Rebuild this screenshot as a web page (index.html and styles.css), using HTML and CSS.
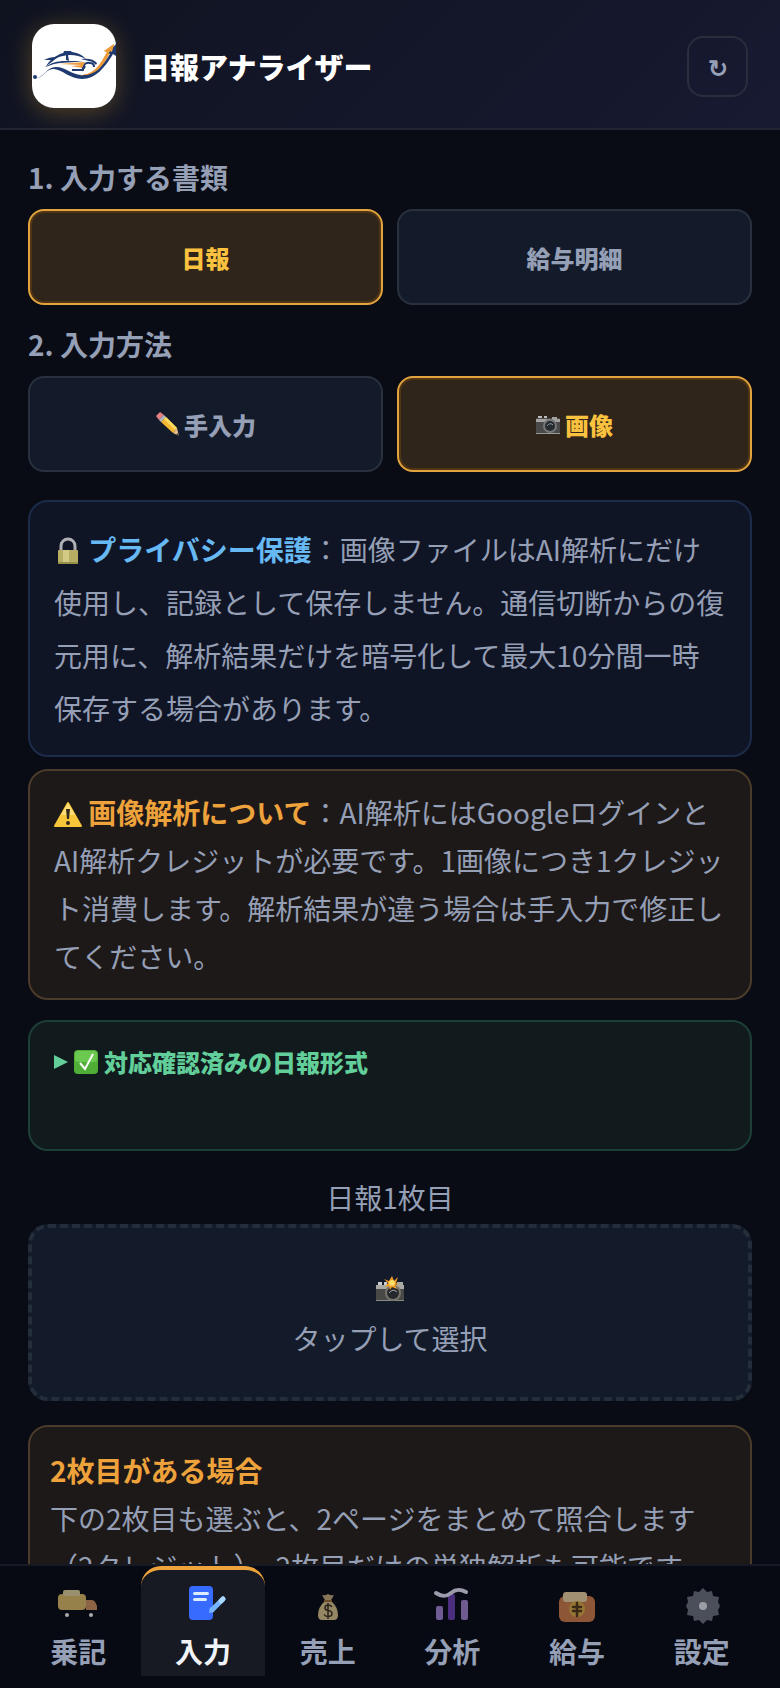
FILE: index.html
```html
<!DOCTYPE html>
<html lang="ja">
<head>
    <meta charset="UTF-8">
    <meta name="viewport" content="width=device-width, initial-scale=1.0">
    <title>日報アナライザー</title>
    <link rel="stylesheet" href="styles.css">
</head>
<body>
    <header class="header">
        <svg class="logo" viewBox="0 0 84 84" aria-hidden="true">
            <rect width="84" height="84" fill="#fff"/>
            <g fill="#1e3a70">
                <path d="M14 42c4-6 8-9 14-12 9-4 20-2 26 5-8-4-16-5-23-3-7 1-9 5-17 10z"/>
                <path d="M12 36c4-2 7-3 12-3l-4 3c-3 0-5 0-8 0zM13 43c6-4 12-6 20-6l18 0c-10 2-22 1-29 3-3 1-5 2-9 3z"/>
                <path d="M49 35c7-1 13 0 16 4l-1 2c-3-4-8-4-15-6z"/>
                <path d="M31 30l1-3h7l2 3z"/>
                <path d="M34 31h2l1 6-3-1z"/>
            </g>
            <path d="M51 47c-1-6 3-9 7-8 3 0 4 2 4 4M40 46l10 0c1 0 2-2 3-4" fill="none" stroke="#1e3a70" stroke-width="2"/>
            <path d="M27 40l26-2-3 6-11-2 11-1z" fill="#ee9c3b"/>
            <path d="M48 51c14 0 20-10 27-23l-3-1 10-7-1 10-3-1c-7 14-14 23-25 23-2 0-4 0-5-1z" fill="#ee9c3b"/>
            <path d="M4 54c8 0 10-11 20-11 10 0 15 8 27 8 13 0 19-8 27-21l-2-1 8-9v12l-3-2c-8 13-17 25-31 25-12 0-19-9-28-10-8-1-10 9-18 9z" fill="#1e3a70"/>
            <path d="M48 51c14 0 20-10 27-23l-3-1 10-7-2 8-2-1c-7 14-14 23-25 24-2 0-4 1-5 0z" fill="#ee9c3b"/>
            <circle cx="3" cy="53" r="2" fill="#1e3a70"/>
        </svg>
        <h1>日報アナライザー</h1>
        <button type="button" class="reload-button" aria-label="再読み込み">↻</button>
    </header>

    <main class="content">
        <h2>1. 入力する書類</h2>
        <div class="button-group">
            <button type="button" class="choice active">日報</button>
            <button type="button" class="choice">給与明細</button>
        </div>

        <h2>2. 入力方法</h2>
        <div class="button-group">
            <button type="button" class="choice">
                <svg class="emoji-small" viewBox="0 0 24 24" aria-hidden="true">
                    <path d="M1 4l4-4 4 3-5 5z" fill="#e4807f"/>
                    <path d="M4 8l5-5 2 2-5 5z" fill="#b4bac2"/>
                    <path d="M6 10l5-5 11 11-4 5z" fill="#f5b731"/>
                    <path d="M9 7l2-2 11 11-2 2z" fill="#ffdc62"/>
                    <path d="M22 16l2 8-6-3z" fill="#e3bd8c"/>
                    <path d="M24 24l-3-1 2-2z" fill="#333"/>
                </svg>
                手入力
            </button>
            <button type="button" class="choice active">
                <svg class="emoji-small" viewBox="0 0 24 24" aria-hidden="true">
                    <path d="M2 4h4v3H2zM8 4h3v3H8z" fill="#bcbcbc"/>
                    <rect y="6" width="24" height="16" rx="1" fill="#494949"/>
                    <path d="M0 7h24v3H0zM16 5h5v3h-5z" fill="#a2a2a0"/>
                    <path d="M0 21h24v1H0z" fill="#999"/>
                    <circle cx="14" cy="14" r="7" fill="#777"/>
                    <circle cx="14" cy="14" r="5" fill="#252b30"/>
                    <path d="M11 14q3-4 6-1" fill="none" stroke="#8f999f"/>
                </svg>
                画像
            </button>
        </div>

        <section class="notice privacy">
            <svg class="emoji" viewBox="0 0 28 28" aria-hidden="true">
                <path d="M7 15V9a7 7 0 0 1 14 0v6" fill="none" stroke="#aeb0b4" stroke-width="3"/>
                <rect x="4" y="13" width="20" height="14" rx="1" fill="#b7ad63"/>
                <path d="M9 13h6v14H9z" fill="#d3ca86"/>
                <path d="M4 25h20v2H4z" fill="#94904c"/>
            </svg>
            <strong>プライバシー保護</strong>：画像ファイルはAI解析にだけ使用し、記録として保存しません。通信切断からの復元用に、解析結果だけを暗号化して最大10分間一時保存する場合があります。
        </section>

        <section class="notice warning">
            <svg class="emoji" viewBox="0 0 28 28" aria-hidden="true">
                <path d="M14 3l13 23H1z" fill="#f8c63a" stroke="#f8c63a" stroke-width="2" stroke-linejoin="round"/>
                <path d="M14 3L7 15l14 0z" fill="#ffde75"/>
                <path d="M12 9h4l-1 10h-2z" fill="#32281c"/>
                <circle cx="14" cy="23" r="2" fill="#32281c"/>
            </svg>
            <strong>画像解析について</strong>：AI解析にはGoogleログインとAI解析クレジットが必要です。1画像につき1クレジット消費します。解析結果が違う場合は手入力で修正してください。
        </section>

        <details class="formats">
            <summary>
                <svg class="marker" viewBox="0 0 14 16" aria-hidden="true"><path d="M0 1l14 7-14 7z" fill="#62ce99"/></svg>
                <svg class="emoji-check" viewBox="0 0 24 24" aria-hidden="true">
                    <rect width="24" height="24" rx="4" fill="#4fae36"/>
                    <rect x="1" y="1" width="22" height="11" rx="3" fill="#6cc950"/>
                    <path d="M6 13l5 6 8-15" fill="none" stroke="#fff" stroke-width="2"/>
                </svg>
                対応確認済みの日報形式
            </summary>
        </details>

        <label class="upload-label" for="report-image">日報1枚目</label>
        <label class="upload-box" for="report-image">
            <svg class="camera" viewBox="0 0 28 28" aria-hidden="true">
                <path d="M2 7h4v3H2zM8 7h3v3H8z" fill="#ccc"/>
                <rect y="10" width="28" height="16" rx="1" fill="#484946"/>
                <path d="M0 10h28v4H0zM21 7h6v4h-6z" fill="#a9aaa3"/>
                <path d="M0 25h28v1H0z" fill="#898a87"/>
                <circle cx="17" cy="18" r="8" fill="#77746d"/>
                <circle cx="17" cy="18" r="6" fill="#25292d"/>
                <path d="M13 18q4-5 8-1" fill="none" stroke="#9b9fa2"/>
                <path d="M16 1l2 5 4-4-2 6 3 1-4 1 2 4-5-2-2 3-1-4-4 1 3-4-4-4 5 2z" fill="#f29b23"/>
                <circle cx="16" cy="8" r="3" fill="#ffdc66"/>
            </svg>
            <span>タップして選択</span>
        </label>
        <input type="file" id="report-image" accept="image/*" hidden>

        <section class="notice second-page">
            <strong>2枚目がある場合</strong>
            <p>下の2枚目も選ぶと、2ページをまとめて照合します（2クレジット）。2枚目だけの単独解析も可能です。</p>
        </section>
    </main>

    <nav class="tabs">
        <a href="#ride">
            <svg class="tab-icon" viewBox="0 0 40 40" aria-hidden="true">
                <rect y="10" width="28" height="16" rx="4" fill="#97814b"/>
                <rect x="5" y="6" width="17" height="6" rx="2" fill="#99916e"/>
                <path d="M28 16h6q3 0 5 6v4H28z" fill="#8c6345"/>
                <circle cx="9" cy="31" r="2" fill="#aaa9a8"/>
                <circle cx="33" cy="31" r="2" fill="#aaa9a8"/>
            </svg>
            <span>乗記</span>
        </a>
        <a href="#input" class="active" aria-current="page">
            <svg class="tab-icon" viewBox="0 0 40 40" aria-hidden="true">
                <rect x="6" y="2" width="24" height="34" rx="4" fill="#376bff"/>
                <path d="M11.500 9.500h13M11.500 15.500h11" stroke="#dcedff" stroke-width="3" stroke-linecap="round"/>
                <path d="M29 26L40 15" stroke="#76b6ff" stroke-width="5" stroke-linecap="round"/>
                <path d="M26 29l1-6 5 4z" fill="#76b6ff"/>
                <path d="M38 17l2-2" stroke="#a9d8ff" stroke-width="5" stroke-linecap="round"/>
            </svg>
            <span>入力</span>
        </a>
        <a href="#sales">
            <svg class="tab-icon" viewBox="0 0 40 40" aria-hidden="true">
                <path d="M14 11q3 1 6-1 3 2 6 1l-4 7h-4z" fill="#89765a"/>
                <path d="M17 17h6q7 6 7 14 0 5-4 5H14q-4 0-4-5 0-8 7-14z" fill="#968764"/>
                <path d="M16 17h8" stroke="#6d4c2b" stroke-width="2"/>
                <path d="M24 23q-1-2-4-2-3 0-3 3 0 2 3 2.500 4 .5 4 3 0 3-4 3-3 0-4-2M20 19v16" fill="none" stroke="#29231d" stroke-width="1.500"/>
            </svg>
            <span>売上</span>
        </a>
        <a href="#analysis">
            <svg class="tab-icon" viewBox="0 0 40 40" aria-hidden="true">
                <rect x="4" y="22" width="7" height="14" rx="2" fill="#6f5c95"/>
                <rect x="16" y="10" width="7" height="26" rx="2" fill="#4b2f7e"/>
                <rect x="29" y="16" width="7" height="20" rx="2" fill="#705b91"/>
                <path d="M4 9c6 4 10 4 15 0 5-4 9-4 15-1" fill="none" stroke="#9b9bab" stroke-width="4" stroke-linecap="round"/>
            </svg>
            <span>分析</span>
        </a>
        <a href="#salary">
            <svg class="tab-icon" viewBox="0 0 40 40" aria-hidden="true">
                <rect x="2" y="12" width="36" height="26" rx="6" fill="#8d5637"/>
                <rect x="6" y="8" width="24" height="10" rx="3" fill="#a19072"/>
                <circle cx="20" cy="25" r="8" fill="#967535"/>
                <path d="M20 19v13M16 23h8M16 27h8" stroke="#3b2918" stroke-width="2.500" stroke-linecap="round"/>
            </svg>
            <span>給与</span>
        </a>
        <a href="#settings">
            <svg class="tab-icon" viewBox="0 0 40 40" aria-hidden="true">
                <path d="M21 4l4 4 5-1 1 5 6 1-1 5 2 4-2 4 1 5-6 1-1 5-5-1-4 4-4-4-5 1-1-5-6-1 1-5-2-4 2-4-1-5 6-1 1-5 5 1z" fill="#4b4f59"/>
                <circle cx="21" cy="22" r="4" fill="#9b9ea4"/>
            </svg>
            <span>設定</span>
        </a>
    </nav>
</body>
</html>
```

FILE: styles.css
```css
* {
    box-sizing: border-box;
}

body {
    font-family: "Noto Sans CJK JP", sans-serif;
    font-size: 28px;
    line-height: 40px;
    color: #959fb5;
    background-color: #090c14;
    margin: 0;
    height: 100vh;
    display: flex;
    flex-direction: column;
}

h1, h2, p {
    margin: 0;
}

button {
    font-family: inherit;
    color: inherit;
    cursor: pointer;
}

.header {
    display: flex;
    align-items: center;
    gap: 25px;
    padding: 24px 32px 20px;
    background: linear-gradient(135deg, #0f1320, #171a31);
    border-bottom: 2px solid #232533;
    flex-shrink: 0;
}

.logo {
    width: 84px;
    height: 84px;
    border-radius: 22px;
    box-shadow: 0 4px 24px rgba(245, 180, 50, 0.3);
}

.header h1 {
    flex: 1;
    font-size: 29px;
    font-weight: 900;
    color: #fff;
}

.reload-button {
    width: 61px;
    height: 61px;
    padding: 0;
    background: none;
    border: 2px solid #2a2d3c;
    border-radius: 16px;
    font-size: 24px;
    font-weight: 700;
}

.content {
    flex: 1;
    min-height: 0;
    overflow-y: auto;
    scrollbar-width: none;
    padding: 27px 28px 24px;
}

.content h2 {
    font-size: 28px;
    font-weight: 700;
    margin-bottom: 12px;
}

.button-group {
    display: grid;
    grid-template-columns: 1fr 1fr;
    gap: 14px;
    margin-bottom: 19px;
}

.choice {
    display: flex;
    align-items: center;
    justify-content: center;
    gap: 5px;
    height: 96px;
    background-color: #131b2b;
    border: 2px solid #2a313e;
    border-radius: 16px;
    font-size: 24px;
    font-weight: 900;
}

.choice.active {
    background-color: #30251b;
    border-color: #e3a43d;
    box-shadow: inset 0 0 0 2px #503515;
    color: #fac23e;
}

.emoji-small, .emoji-check {
    width: 24px;
    height: 24px;
}

.notice {
    border: 2px solid #4b3b2a;
    border-radius: 20px;
    background-color: #1d1919;
    line-height: 48px;
}

.notice strong {
    color: #eda23b;
}

.emoji {
    width: 28px;
    height: 28px;
    vertical-align: -4px;
}

.privacy {
    margin-top: 28px;
    padding: 21px 24px 20px;
    line-height: 53px;
    background-color: #101526;
    border-color: #1c2b49;
}

.privacy strong {
    color: #66b9f3;
}

.warning {
    margin-top: 12px;
    padding: 17px 24px 18px;
}

.formats {
    margin-top: 20px;
    min-height: 131px;
    padding: 20px 24px;
    background-color: #111a1d;
    border: 2px solid #1e3f38;
    border-radius: 20px;
}

.formats summary {
    display: flex;
    align-items: center;
    gap: 6px;
    font-size: 24px;
    font-weight: 900;
    color: #62ce99;
    cursor: pointer;
}

.marker {
    width: 14px;
    height: 16px;
}

.upload-label {
    display: block;
    margin: 26px 0 7px;
    text-align: center;
}

.upload-box {
    display: flex;
    flex-direction: column;
    align-items: center;
    gap: 15px;
    padding: 47px 20px 39px;
    background-color: #131b2b;
    border: 4px dashed #242d3a;
    border-radius: 20px;
    cursor: pointer;
}

.camera {
    width: 28px;
    height: 28px;
}

.second-page {
    margin-top: 24px;
    padding: 19px 20px;
}

.tabs {
    display: flex;
    flex-shrink: 0;
    padding: 0 16px 12px;
    background-color: #070a13;
    border-top: 2px solid #151a25;
}

.tabs a {
    flex: 1;
    height: 110px;
    display: flex;
    flex-direction: column;
    align-items: center;
    gap: 7px;
    padding-top: 14px;
    border-top: 4px solid transparent;
    color: inherit;
    font-weight: 700;
    text-decoration: none;
}

.tabs a.active {
    background-color: #171a22;
    border-top-color: #eda23b;
    border-radius: 20px 20px 0 0;
    color: #f1f3f8;
}

.tab-icon {
    width: 40px;
    height: 40px;
    overflow: visible;
}
```
